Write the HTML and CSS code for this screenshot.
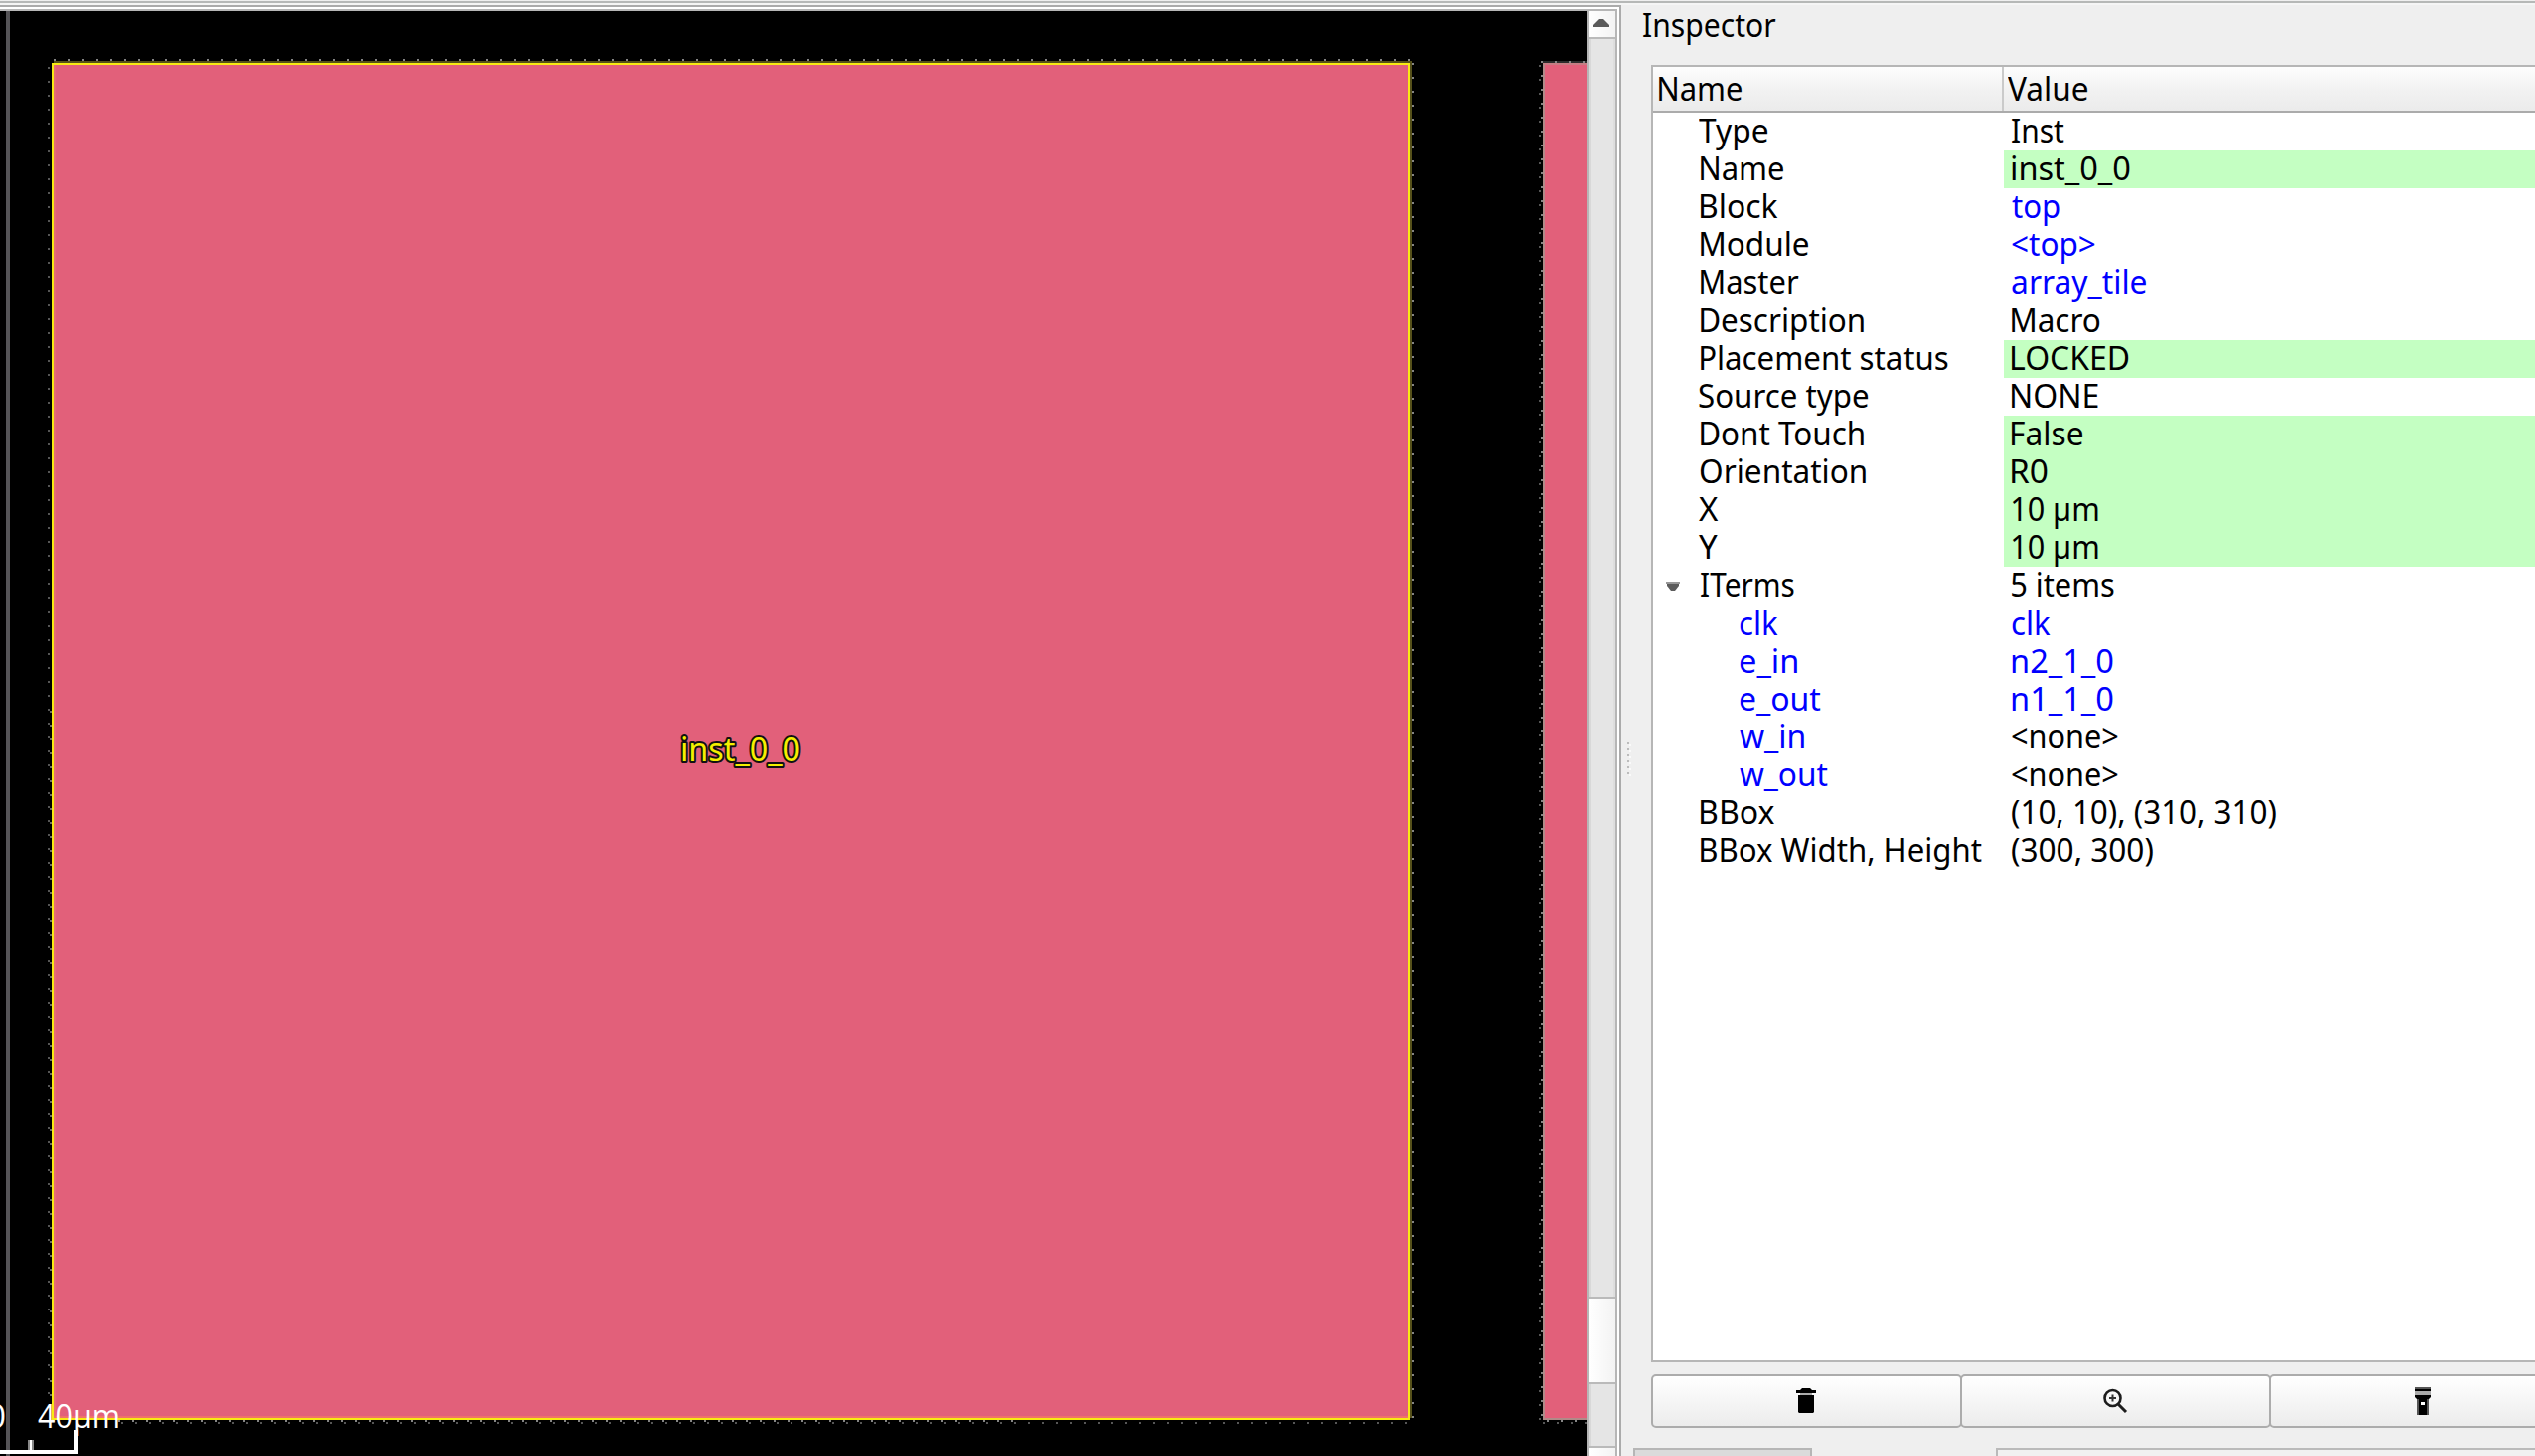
FILE: index.html
```html
<!DOCTYPE html>
<html lang="en">
<head>
<meta charset="utf-8">
<title>Inspector</title>
<link rel="stylesheet" href="styles.css">
</head>
<body>
<div class="window">
  <div class="topline"></div>
  <div class="main">
    <section class="viewer">
      <div class="viewport">
        <div class="canvas">
          <div class="guide"></div>
          <div class="dots dots-top"></div>
          <div class="dots dots-left"></div>
          <div class="dots dots-left-low"></div>
          <div class="dots dots-right"></div>
          <div class="dots dots-bottom"></div>
          <div class="dots dots-bottom-outer"></div>
          <div class="inst selected"></div>
          <div class="inst neighbor"></div>
          <div class="dots next-top"></div>
          <div class="dots next-left"></div>
          <div class="dots next-left-outer"></div>
          <div class="dots next-bottom"></div>
          <div class="dots next-bottom-outer"></div>
          <svg class="overlay" width="1592" height="1450" viewBox="0 11 1592 1450">
            <text class="inst-name" x="682" y="764" textLength="121" lengthAdjust="spacingAndGlyphs">inst_0_0</text>
            <text class="ruler-text" x="-13" y="1432.5" textLength="19" lengthAdjust="spacingAndGlyphs">0</text>
            <text class="ruler-text" x="38" y="1432.5" textLength="82" lengthAdjust="spacingAndGlyphs">40µm</text>
            <path fill="#fff" d="M0 1455H74V1435H78V1459H0Z"/>
            <path fill="#888" d="M28 1445H34V1455H28Z"/>
            <path fill="#fff" d="M30 1445H32V1455H30Z"/>
          </svg>
        </div>
        <div class="scrollbar">
          <div class="step up"><svg width="16" height="8" viewBox="0 0 16 8"><path fill="#5a5a5a" d="M0 8V6L6 0H10L16 6V8Z"/></svg></div>
          <div class="track"></div>
          <div class="handle"></div>
          <div class="track-end"></div>
          <div class="step down"></div>
        </div>
      </div>
    </section>
    <div class="splitter"><i></i><i></i><i></i><i></i><i></i><i></i></div>
    <section class="inspector">
      <h1 class="title"><span data-ink="134">Inspector</span></h1>
      <div class="tree">
        <div class="head"><div class="name"><span data-ink="83">Name</span></div><div class="value"><span data-ink="80">Value</span></div></div>
        <div class="row"><div class="name flush"><span data-ink="69">Type</span></div><div class="value"><span data-ink="53">Inst</span></div></div>
        <div class="row edit"><div class="name"><span data-ink="83">Name</span></div><div class="value"><span data-ink="119">inst_0_0</span></div></div>
        <div class="row"><div class="name"><span data-ink="78">Block</span></div><div class="value link"><span data-ink="48">top</span></div></div>
        <div class="row"><div class="name"><span data-ink="108">Module</span></div><div class="value link"><span data-ink="84">&lt;top&gt;</span></div></div>
        <div class="row"><div class="name"><span data-ink="99">Master</span></div><div class="value link"><span data-ink="135">array_tile</span></div></div>
        <div class="row"><div class="name"><span data-ink="164">Description</span></div><div class="value"><span data-ink="89">Macro</span></div></div>
        <div class="row edit"><div class="name"><span data-ink="248">Placement status</span></div><div class="value"><span data-ink="118">LOCKED</span></div></div>
        <div class="row"><div class="name flush"><span data-ink="170">Source type</span></div><div class="value"><span data-ink="87">NONE</span></div></div>
        <div class="row edit"><div class="name"><span data-ink="164">Dont Touch</span></div><div class="value"><span data-ink="71">False</span></div></div>
        <div class="row edit"><div class="name"><span data-ink="166">Orientation</span></div><div class="value"><span data-ink="36">R0</span></div></div>
        <div class="row edit"><div class="name flush"><span data-ink="20">X</span></div><div class="value"><span data-ink="87">10 µm</span></div></div>
        <div class="row edit"><div class="name flush"><span data-ink="19">Y</span></div><div class="value"><span data-ink="87">10 µm</span></div></div>
        <div class="row parent"><svg class="arrow" width="16" height="10" viewBox="0 0 16 10"><path fill="#999" d="M1 0H15V2H1Z"/><path fill="#5c5c5c" d="M2 2H14V4L10 9H6L2 4Z"/></svg><div class="name"><span data-ink="94">ITerms</span></div><div class="value"><span data-ink="103">5 items</span></div></div>
        <div class="row child"><div class="name link"><span data-ink="39">clk</span></div><div class="value link"><span data-ink="39">clk</span></div></div>
        <div class="row child"><div class="name link"><span data-ink="58">e_in</span></div><div class="value link"><span data-ink="102">n2_1_0</span></div></div>
        <div class="row child"><div class="name link"><span data-ink="82">e_out</span></div><div class="value link"><span data-ink="102">n1_1_0</span></div></div>
        <div class="row child"><div class="name link"><span data-ink="65">w_in</span></div><div class="value"><span data-ink="107">&lt;none&gt;</span></div></div>
        <div class="row child"><div class="name link"><span data-ink="89">w_out</span></div><div class="value"><span data-ink="107">&lt;none&gt;</span></div></div>
        <div class="row"><div class="name"><span data-ink="74">BBox</span></div><div class="value"><span data-ink="265">(10, 10), (310, 310)</span></div></div>
        <div class="row"><div class="name"><span data-ink="282">BBox Width, Height</span></div><div class="value"><span data-ink="142">(300, 300)</span></div></div>
      </div>
      <div class="buttons">
        <button class="btn" aria-label="Delete"><svg width="20" height="28" viewBox="0 0 20 28"><path d="M0 3H4L6 1H14L16 3H20V6H0Z"/><path fill="#aaa" d="M4 6H16V8H4Z"/><path d="M2 8H18V25L17 26H3L2 25Z"/></svg></button>
        <button class="btn" aria-label="Zoom to"><svg width="26" height="26" viewBox="0 0 26 26"><circle cx="10.5" cy="10" r="8" fill="none" stroke="#1c1c1c" stroke-width="2.6"/><path d="M10.5 6.5V13.5M7 10H14" stroke="#333" stroke-width="2"/><path d="M15.5 15.5L24 24" stroke="#1c1c1c" stroke-width="3"/></svg></button>
        <button class="btn last" aria-label="Highlight"><svg width="16" height="28" viewBox="0 0 16 28"><path fill="#555" d="M0 0H16V2H0Z"/><path d="M0 2H16V4H0Z"/><path fill="#aaa" d="M0 4H16V8H0Z"/><path d="M0 8H16V10L14 12V28H2V12L0 10Z"/><path fill="#555" d="M2 12H4V28H2ZM12 12H14V28H12Z"/><path fill="#fff" d="M6 15H10V18H6Z"/></svg></button>
      </div>
      <div class="tabs"><div class="tab"></div><div class="pane"></div></div>
    </section>
  </div>
</div>
<script src="fit.js"></script>
</body>
</html>
```
FILE: styles.css
```css
* { box-sizing: border-box; }
body {
  margin: 0;
  width: 2543px;
  height: 1461px;
  overflow: hidden;
  background: #efefef;
  color: #000;
  font-family: "Noto Sans", "Open Sans", sans-serif;
  font-size: 33px;
}
.window { display: flex; flex-direction: column; height: 1461px; }
.topline { height: 5px; flex: none; border-top: 1px solid #efefef; background: linear-gradient(#b6b8b7 2px, #f5f5f5 2px); }
.main { display: flex; flex: 1; min-height: 0; }

.viewer {
  flex: none;
  width: 1626px;
  background: #fff;
  border-top: 2px solid #ababab;
  border-right: 2px solid #ababab;
  padding: 2px 2px 0 0;
}
.viewport { display: flex; height: 1452px; border-top: 2px solid #b6b6b6; border-right: 2px solid #b6b6b6; }
.canvas { position: relative; flex: none; width: 1592px; background: #000; overflow: hidden; }
.guide { position: absolute; left: 6px; top: 0; width: 4px; height: 1450px; background: #555457; }
.inst { position: absolute; background: #e2607a; }
.selected {
  left: 52px; top: 52px; width: 1362px; height: 1362px;
  border: 2px solid #f8ea13;
  box-shadow: 2px -2px 0 #55501a, inset 0 -2px 0 #ee7468, inset 2px 0 0 #e66c75;
}
.neighbor {
  left: 1548px; top: 52px; width: 60px; height: 1362px;
  border: 2px solid #b08a88;
  border-top-color: #c77c83;
  box-shadow: 0 -2px 0 #2b2b2b;
}
.dots { position: absolute; }
.dots-top, .dots-bottom, .dots-bottom-outer, .next-top, .next-bottom, .next-bottom-outer {
  height: 2px;
  background: repeating-linear-gradient(90deg, #858585 0 2px, transparent 2px 14px);
}
.dots-left, .dots-left-low, .dots-right, .next-left, .next-left-outer {
  width: 2px;
  background: repeating-linear-gradient(#858585 0 2px, transparent 2px 14px);
}
.dots-top { left: 54px; top: 48px; width: 1360px; }
.dots-left { left: 48px; top: 56px; height: 1346px; opacity: .65; }
.dots-left-low { left: 50px; top: 702px; height: 700px; opacity: .8; }
.dots-right { left: 1416px; top: 52px; height: 1362px; }
.dots-bottom { left: 118px; top: 1414px; width: 900px; }
.dots-bottom-outer { left: 121px; top: 1416px; width: 1294px; opacity: .65; }
.next-top { left: 1546px; top: 50px; width: 46px; }
.next-left { left: 1546px; top: 64px; height: 1350px; }
.next-left-outer { left: 1544px; top: 54px; height: 1360px; opacity: .65; }
.next-bottom { left: 1552px; top: 1414px; width: 40px; }
.next-bottom-outer { left: 1548px; top: 1416px; width: 44px; opacity: .65; }
.overlay { position: absolute; left: 0; top: 0; }
.inst-name { fill: #f4f000; stroke: #111; stroke-width: 4px; stroke-linejoin: round; paint-order: stroke; }
.ruler-text { fill: #fff; font-family: "Open Sans", "Noto Sans", sans-serif; font-size: 32px; }

.scrollbar { display: flex; flex-direction: column; width: 28px; border-left: 2px solid #b6b6b6; }
.step { display: flex; align-items: center; justify-content: center; flex: none; background: linear-gradient(90deg, #fff, #f3f3f3); }
.up { height: 28px; padding: 0 2px 2px 0; border-bottom: 2px solid #bababa; }
.track { flex: none; height: 1262px; background: linear-gradient(90deg, #d8d8d8 0 2px, #e5e5e5 2px 24px, #dedede 24px); }
.handle { flex: none; height: 88px; border: solid #bababa; border-width: 2px 0; background: linear-gradient(90deg, #fff, #f3f3f3); }
.track-end { flex: none; height: 62px; background: linear-gradient(90deg, #d8d8d8 0 2px, #e5e5e5 2px); }
.down { height: 10px; border-top: 2px solid #bababa; }

.splitter { display: flex; flex: none; flex-direction: column; gap: 4px; width: 12px; padding: 740px 0 0 6px; }
.splitter i { width: 2px; height: 2px; background: #bcbcbc; box-shadow: 2px 2px 0 #fafafa; }

.inspector { display: flex; flex-direction: column; flex: none; width: 905px; }
.title { height: 60px; margin: 0; padding-left: 10px; font-size: inherit; font-weight: 400; line-height: 40px; }
[data-ink] { display: inline-block; white-space: pre; transform-origin: 0 0; }
.tree { height: 1302px; margin-left: 18px; border: 2px solid #b6b6b6; border-right: 0; background: #fff; }
.head { display: flex; height: 46px; border-bottom: 2px solid #ababab; background: linear-gradient(#fdfdfd, #f2f2f2 50%, #ebebeb); line-height: 43px; }
.head .name { width: 352px; padding-left: 6px; border-right: 2px solid #cacaca; }
.head .value { padding-left: 4px; }
.row { position: relative; display: flex; height: 38px; line-height: 36px; }
.row .name { flex: none; width: 352px; padding-left: 48px; }
.row .name.flush { padding-left: 46px; }
.row.child .name { padding-left: 87px; }
.row .value { flex: 1; padding-left: 8px; }
.row.edit .value { background: #c4ffc2; }
.link { color: #00f; }
.arrow { position: absolute; left: 12px; top: 15px; }

.buttons { display: flex; flex: none; margin: 12px 0 0 18px; overflow: hidden; }
.btn {
  display: flex; align-items: center; justify-content: center;
  flex: none; width: 312px; height: 54px; margin-right: -2px; padding: 0;
  border: 2px solid #acacac; border-radius: 5px;
  background: linear-gradient(#fff, #ececec);
}
.btn.last { width: 309px; }
.tabs { display: flex; flex: 1; gap: 184px; margin-top: 20px; }
.tab { width: 180px; border: 2px solid #b6b6b6; border-bottom: 0; background: #dbdbdb; }
.pane { flex: 1; border: 2px solid #bababa; border-width: 2px 0 0 2px; background: #f1f1f1; }
```
FILE: fit.js
```js
const ctx = document.createElement("canvas").getContext("2d");
for (const el of document.querySelectorAll("[data-ink]")) {
  const cs = getComputedStyle(el);
  ctx.font = `${cs.fontSize} ${cs.fontFamily}`;
  const m = ctx.measureText(el.textContent);
  const left = -m.actualBoundingBoxLeft;
  const scale = Number(el.dataset.ink) / (m.actualBoundingBoxRight - left);
  el.style.transform = `translateX(${-left * scale}px) scaleX(${scale})`;
}
```
